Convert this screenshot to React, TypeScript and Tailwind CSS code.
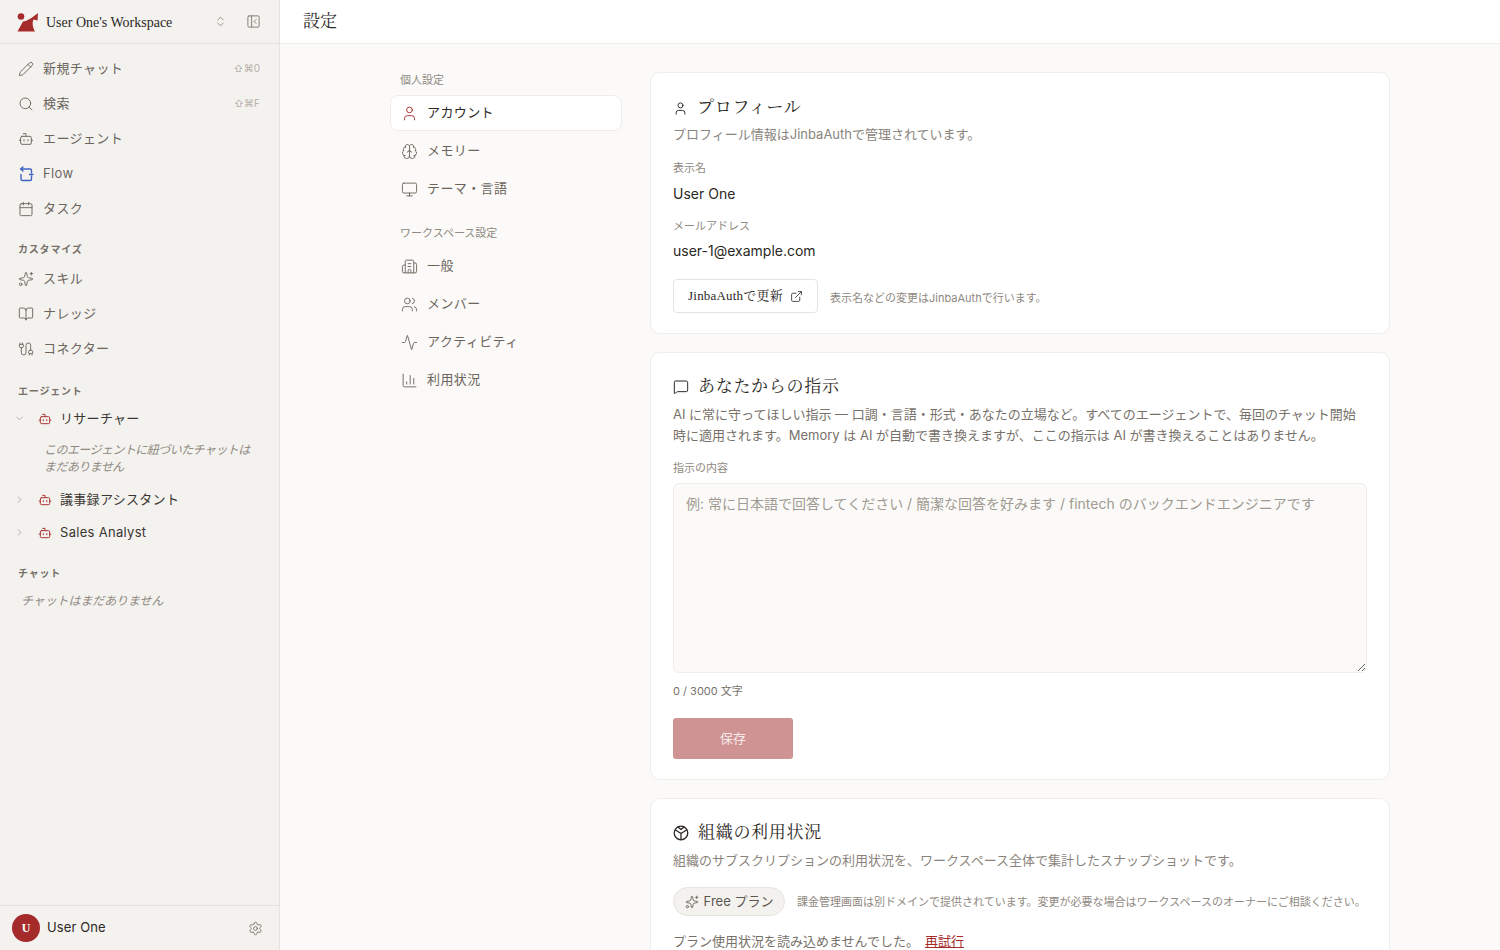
import {
  Activity,
  BookOpen,
  Bot,
  Brain,
  Building2,
  Cable,
  Calendar,
  ChartColumn,
  ChevronDown,
  ChevronRight,
  ChevronsUpDown,
  ExternalLink,
  MessageSquare,
  Monitor,
  PanelLeftClose,
  Pencil,
  Search,
  Settings,
  Sparkles,
  User,
  Users,
  type LucideIcon,
} from "lucide-react";

const sans = "font-['Inter','Noto_Sans_CJK_JP',sans-serif]";
const serif = "font-['Liberation_Serif','Noto_Serif_CJK_JP','Noto_Sans_CJK_JP',serif]";

function Logo() {
  return (
    <svg width="21" height="20" viewBox="0 0 21 20" fill="#a52a2a">
      <circle cx="4" cy="4.500" r="3.300" />
      <path d="M0.500 19.500 L6 9.500 C10 9.500 16 5 21 1 L20.500 8.500 L16.500 7.500 C15 10.500 15.500 15.500 18 19.500 Z" />
    </svg>
  );
}

function FlowIcon() {
  return (
    <svg width="16" height="16" viewBox="0 0 16 16" fill="none" stroke="#3f63c4" strokeWidth="1.4" strokeLinecap="round" strokeLinejoin="round">
      <path d="M5 1 L2.500 3 L5 5 M2.500 3 H12 a1.500 1.500 0 0 1 1.500 1.500 V7" />
      <path d="M13.500 10 V13 a1.500 1.500 0 0 1-1.500 1.500 H4.500 a1.500 1.500 0 0 1-1.500-1.500 V8.500" />
      <path d="M11.500 8.500 H15" />
    </svg>
  );
}

function OrgIcon() {
  return (
    <svg width="16" height="16" viewBox="0 0 16 16" fill="none" stroke="#2b2825" strokeWidth="1.3" strokeLinecap="round" strokeLinejoin="round">
      <circle cx="8" cy="8" r="6.800" />
      <path d="M2.500 5 8 8.500 13.500 5M8 8.500v6M5 2 8 4.500 11 2" />
    </svg>
  );
}

function NavItem({ icon: Icon, label, hint }: { icon?: LucideIcon; label: string; hint?: string }) {
  return (
    <div className="flex h-[35px] items-center pl-[18px] pr-[19px]">
      <span className="flex w-[25px] shrink-0 items-center">
        {Icon ? <Icon size={16} strokeWidth={1.4} className="text-[#6b655d]" /> : <FlowIcon />}
      </span>
      <span className="text-[13px] tracking-[0.4px] text-[#6b655d]">{label}</span>
      {hint && <span className="ml-auto text-[10px] text-[#b4afa8]">{hint}</span>}
    </div>
  );
}

function SectionLabel({ children, className }: { children: string; className: string }) {
  return <div className={`pl-[18px] text-[10px] font-semibold tracking-[0.8px] text-[#77716a] ${className}`}>{children}</div>;
}

function AgentRow({ label, open }: { label: string; open?: boolean }) {
  const Chevron = open ? ChevronDown : ChevronRight;
  return (
    <div className="flex h-[33px] items-center pl-[14px]">
      <Chevron size={11} strokeWidth={1.5} className="mr-[13px] text-[#98928a]" />
      <Bot size={14} strokeWidth={1.6} className="mr-[8px] text-[#a52a2a]" />
      <span className="text-[13px] tracking-[0.3px] text-[#3a3632]">{label}</span>
    </div>
  );
}

function Sidebar() {
  return (
    <aside className="flex h-[950px] w-[280px] shrink-0 flex-col border-r border-[#e5e3df] bg-[#f4f2ef]">
      <div className="flex h-[44px] shrink-0 items-center border-b border-[#e3e1dd] pl-[17px] pr-[18px]">
        <Logo />
        <span className={`ml-[8px] pt-[2px] text-[14px] text-[#2b2825] ${serif}`}>User One's Workspace</span>
        <ChevronsUpDown size={13} strokeWidth={1.4} className="ml-auto text-[#77716a]" />
        <PanelLeftClose size={15} strokeWidth={1.4} className="ml-[19px] text-[#77716a]" />
      </div>
      <div className="pt-[7px]">
        <NavItem icon={Pencil} label="新規チャット" hint="⇧⌘0" />
        <NavItem icon={Search} label="検索" hint="⇧⌘F" />
        <NavItem icon={Bot} label="エージェント" />
        <NavItem label="Flow" />
        <NavItem icon={Calendar} label="タスク" />
      </div>
      <SectionLabel className="mt-[15px] mb-[4px] leading-[16px]">カスタマイズ</SectionLabel>
      <NavItem icon={Sparkles} label="スキル" />
      <NavItem icon={BookOpen} label="ナレッジ" />
      <NavItem icon={Cable} label="コネクター" />
      <SectionLabel className="mt-[17px] mb-[3px] leading-[16px]">エージェント</SectionLabel>
      <AgentRow label="リサーチャー" open />
      <p className="mt-[6px] mb-[8px] pl-[44px] pr-[20px] text-[12px] leading-[17px] tracking-[-0.55px] italic text-[#8f8981]">
        このエージェントに紐づいたチャットはまだありません
      </p>
      <AgentRow label="議事録アシスタント" />
      <AgentRow label="Sales Analyst" />
      <SectionLabel className="mt-[16px] leading-[16px]">チャット</SectionLabel>
      <p className="mt-[12px] pl-[21px] text-[12px] italic leading-[16px] tracking-[-0.1px] text-[#8f8981]">チャットはまだありません</p>
      <div className="mt-auto flex h-[45px] items-center border-t border-[#e3e1dd] pl-[12px] pr-[16px]">
        <span className={`flex h-[28px] w-[28px] items-center justify-center rounded-full bg-[#a52a2a] text-[12px] font-semibold text-white ${serif}`}>U</span>
        <span className="ml-[7px] pb-[1px] text-[13px] tracking-[0.1px] text-[#2b2825]">User One</span>
        <Settings size={15} strokeWidth={1.3} className="ml-auto text-[#6b655d]" />
      </div>
    </aside>
  );
}

function SubItem({ icon: Icon, label, active }: { icon: LucideIcon; label: string; active?: boolean }) {
  return (
    <div className={`flex h-[36px] items-center rounded-[8px] border pl-[10px] ${active ? "border-[#efedea] bg-white" : "border-transparent"}`}>
      <Icon size={17} strokeWidth={1.3} className={`mr-[9px] ${active ? "text-[#a52a2a]" : "text-[#6b655d]"}`} />
      <span className={`text-[13px] tracking-[0.4px] ${active ? "text-[#2b2825]" : "text-[#6b655d]"}`}>{label}</span>
    </div>
  );
}

function SettingsNav() {
  return (
    <nav className="w-[232px] shrink-0">
      <div className="mb-[8px] mt-[1px] pl-[10px] text-[11px] leading-[14px] text-[#8f8981]">個人設定</div>
      <div className="flex flex-col gap-[2px]">
        <SubItem icon={User} label="アカウント" active />
        <SubItem icon={Brain} label="メモリー" />
        <SubItem icon={Monitor} label="テーマ・言語" />
      </div>
      <div className="mb-[8px] mt-[19px] pl-[10px] text-[11px] leading-[14px] text-[#8f8981]">ワークスペース設定</div>
      <div className="flex flex-col gap-[2px]">
        <SubItem icon={Building2} label="一般" />
        <SubItem icon={Users} label="メンバー" />
        <SubItem icon={Activity} label="アクティビティ" />
        <SubItem icon={ChartColumn} label="利用状況" />
      </div>
    </nav>
  );
}

function Card({ children }: { children: React.ReactNode }) {
  return <section className="rounded-[10px] border border-[#efedea] bg-white px-[22px]">{children}</section>;
}

function CardTitle({ icon, children }: { icon: React.ReactNode; children: string }) {
  return (
    <h2 className={`flex items-center gap-[9px] text-[17px] font-normal leading-[24px] tracking-[0.7px] text-[#2b2825] ${serif}`}>
      {icon}
      {children}
    </h2>
  );
}

function ProfileCard() {
  return (
    <Card>
      <div className="pb-[20px] pt-[23px]">
        <CardTitle icon={<User size={15} strokeWidth={1.5} />}>プロフィール</CardTitle>
        <p className="mt-[5px] text-[13px] leading-[18px] text-[#8a847c]">プロフィール情報はJinbaAuthで管理されています。</p>
        <div className="mt-[18px] text-[11px] leading-[14px] text-[#8f8981]">表示名</div>
        <div className="mt-[9px] text-[14px] leading-[20px] text-[#2b2825]">User One</div>
        <div className="mt-[15px] text-[11px] leading-[14px] text-[#8f8981]">メールアドレス</div>
        <div className="mt-[8px] text-[14px] leading-[20px] text-[#2b2825]">user-1@example.com</div>
        <div className="mt-[18px] flex items-center">
          <button className={`flex h-[34px] w-[145px] items-center justify-center gap-[7px] rounded-[4px] border border-[#e5e3df] text-[13px] tracking-[0.2px] text-[#2b2825] ${serif}`}>
            JinbaAuthで更新
            <ExternalLink size={13} strokeWidth={1.5} />
          </button>
          <span className="ml-[12px] pt-[4px] text-[11px] text-[#8f8981]">表示名などの変更はJinbaAuthで行います。</span>
        </div>
      </div>
    </Card>
  );
}

function InstructionsCard() {
  return (
    <Card>
      <div className="pb-[20px] pt-[22px]">
        <CardTitle icon={<MessageSquare size={16} strokeWidth={1.5} />}>あなたからの指示</CardTitle>
        <p className="mt-[5px] text-[13px] leading-[21px] text-[#77716a]">
          AI に常に守ってほしい指示 — 口調・言語・形式・あなたの立場など。すべてのエージェントで、毎回のチャット開始時に適用されます。Memory は AI が自動で書き換えますが、ここの指示は AI が書き換えることはありません。
        </p>
        <div className="mt-[15px] text-[11px] leading-[14px] text-[#8f8981]">指示の内容</div>
        <textarea
          readOnly
          placeholder="例: 常に日本語で回答してください / 簡潔な回答を好みます / fintech のバックエンドエンジニアです"
          className="mt-[8px] block h-[190px] w-full rounded-[6px] border border-[#efedea] bg-[#fbfaf8] px-[12px] py-[10px] text-[14px] leading-[20px] outline-none placeholder:text-[#a09a92]"
        />
        <div className="mt-[11px] text-[11px] leading-[14px] text-[#77716a]">0 / 3000 文字</div>
        <button className="mt-[20px] block h-[41px] w-[120px] rounded-[3px] bg-[#cf9393] text-[13px] text-[#f6eaea]">保存</button>
      </div>
    </Card>
  );
}

function UsageCard() {
  return (
    <Card>
      <div className="pb-[20px] pt-[22px]">
        <CardTitle icon={<OrgIcon />}>組織の利用状況</CardTitle>
        <p className="mt-[6px] text-[13px] leading-[18px] text-[#8a847c]">組織のサブスクリプションの利用状況を、ワークスペース全体で集計したスナップショットです。</p>
        <div className="mt-[18px] flex items-center">
          <span className="flex h-[29px] w-[112px] items-center justify-center gap-[5px] rounded-full border border-[#e8e5e0] bg-[#f4f2ef] text-[13px] text-[#5c564f]">
            <Sparkles size={14} strokeWidth={1.4} />
            Free プラン
          </span>
          <span className="ml-[12px] pt-[1px] text-[11px] text-[#8f8981]">課金管理画面は別ドメインで提供されています。変更が必要な場合はワークスペースのオーナーにご相談ください。</span>
        </div>
        <p className="mt-[16px] text-[13px] leading-[18px] text-[#77716a]">
          プラン使用状況を読み込めませんでした。
          <a className="ml-[6px] text-[#a52a2a] underline">再試行</a>
        </p>
      </div>
    </Card>
  );
}

export default function App() {
  return (
    <div className={`flex h-[950px] w-[1500px] overflow-hidden bg-[#fbfaf8] ${sans}`}>
      <Sidebar />
      <main className="flex min-w-0 flex-1 flex-col">
        <header className="flex h-[44px] shrink-0 items-center border-b border-[#efedea] bg-white pl-[23px]">
          <h1 className={`text-[17px] font-normal text-[#2b2825] ${serif}`}>設定</h1>
        </header>
        <div className="min-h-0 flex-1 overflow-hidden">
          <div className="mx-auto flex w-[1000px] gap-[28px] pt-[28px]">
            <SettingsNav />
            <div className="flex w-[740px] flex-col gap-[18px]">
              <ProfileCard />
              <InstructionsCard />
              <UsageCard />
            </div>
          </div>
        </div>
      </main>
    </div>
  );
}
